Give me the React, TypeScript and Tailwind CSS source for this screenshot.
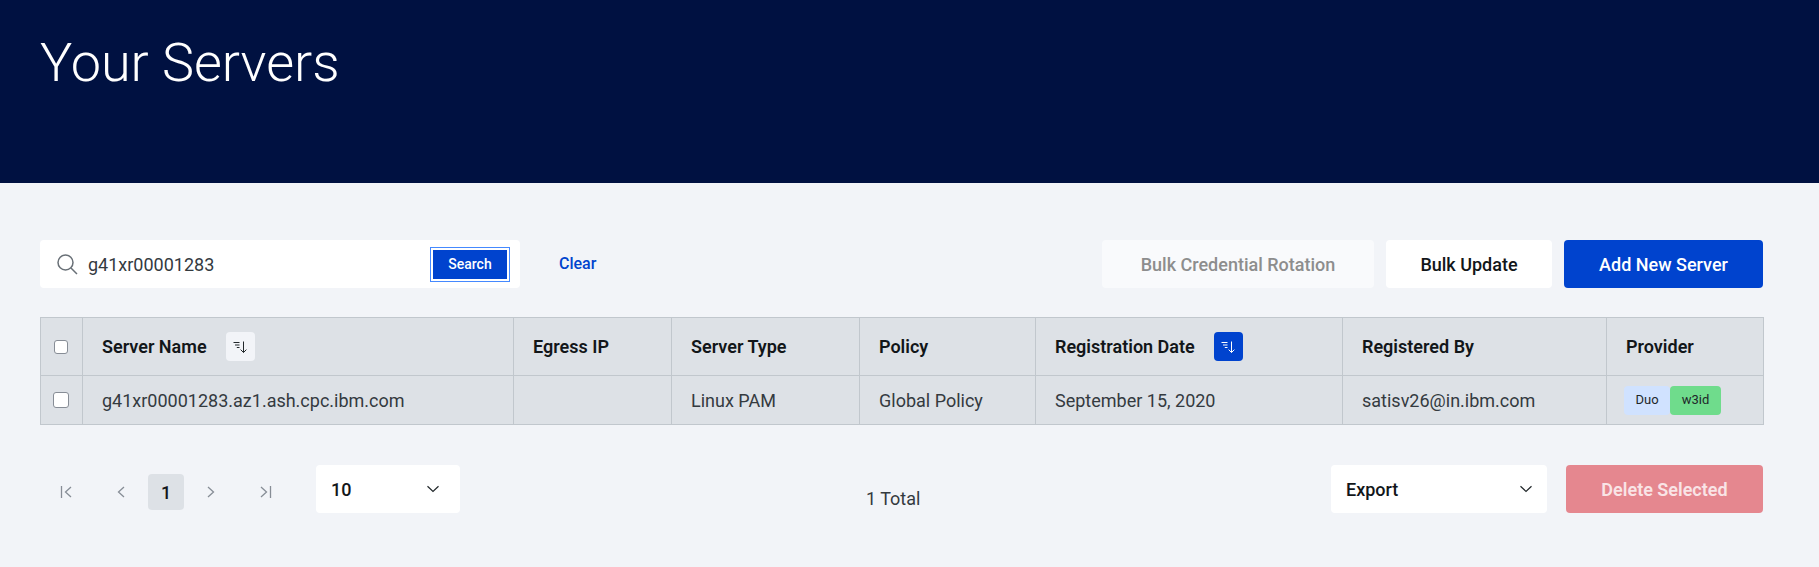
import React from "react";

const font = "font-['Roboto','Noto_Sans',sans-serif]";

function SortIcon({ className }: { className: string }) {
  return (
    <svg viewBox="0 0 16 16" className={className} fill="none" stroke="currentColor" strokeWidth="1">
      <path d="M1.5 3.5h6M3 6h4.5M4.8 8.5h2.7" />
      <path d="M11.5 2.5v11M8.6 10.6l2.9 2.9 2.9-2.9" />
    </svg>
  );
}

function Chevron() {
  return (
    <svg viewBox="0 0 14 8" className="h-2 w-3.5 text-[#21272a]" fill="none" stroke="currentColor" strokeWidth="1.2">
      <path d="M1.5 1.2 7 6.4l5.5-5.2" />
    </svg>
  );
}

function PageIcon({ d }: { d: string }) {
  return (
    <div className="flex h-9 w-[54px] items-center justify-center">
      <svg viewBox="0 0 14 16" className="h-4 w-3.5 text-[#878d96]" fill="none" stroke="currentColor" strokeWidth="1.3">
        <path d={d} />
      </svg>
    </div>
  );
}

const Th = ({ children, className = "" }: { children?: React.ReactNode; className?: string }) => (
  <th className={`border border-[#c1c7cd] pl-[19px] text-left text-[18px] font-semibold text-[#121619] ${className}`}>
    {children}
  </th>
);
const Td = ({ children, className = "" }: { children?: React.ReactNode; className?: string }) => (
  <td className={`border border-[#c1c7cd] pl-[19px] text-[18px] font-normal text-[#343a3f] ${className}`}>
    {children}
  </td>
);
const Check = ({ size }: { size: string }) => (
  <span className={`block rounded-[3px] border border-[#878d96] bg-white ${size}`} />
);

export default function App() {
  return (
    <div className={`${font} h-[567px] bg-[#f2f4f8]`}>
      <header className="h-[183px] bg-[#001141] px-10 pt-[27px]">
        <h1 className="text-[54px] leading-[72px] font-light text-white">Your Servers</h1>
      </header>
      <main className="px-10 pr-[56px] pt-[57px]">
        <div className="flex items-center">
          <div className="flex h-12 w-[480px] items-center rounded bg-white pl-[16px] pr-[10px]">
            <svg viewBox="0 0 22 22" className="h-[22px] w-[22px] text-[#697077]" fill="none" stroke="currentColor" strokeWidth="1.5">
              <circle cx="9.5" cy="9.5" r="7.5" />
              <path d="M15 15l6 6" />
            </svg>
            <span className="ml-[10px] flex-1 text-[18px] text-[#343a3f]">g41xr00001283</span>
            <div className="border border-[#4589ff] p-0.5">
              <button className="h-[29px] w-[74px] bg-[#0043ce] text-[14px] font-medium text-white">Search</button>
            </div>
          </div>
          <button className="ml-[39px] text-[16px] font-medium text-[#0043ce]">Clear</button>
          <div className="ml-auto flex gap-3">
            <button className="h-12 w-[272px] rounded bg-[#f9fafc] text-[18px] font-medium text-[#8d8d8d]">Bulk Credential Rotation</button>
            <button className="h-12 w-[166px] rounded bg-white text-[18px] font-medium text-[#121619]">Bulk Update</button>
            <button className="h-12 w-[199px] rounded bg-[#0043ce] text-[18px] font-medium text-white">Add New Server</button>
          </div>
        </div>

        <table className="mt-[29px] w-[1723px] table-fixed border-collapse bg-[#dde1e6]">
          <colgroup>
            <col className="w-[42px]" />
            <col className="w-[431px]" />
            <col className="w-[158px]" />
            <col className="w-[188px]" />
            <col className="w-[176px]" />
            <col className="w-[307px]" />
            <col className="w-[264px]" />
            <col className="w-[157px]" />
          </colgroup>
          <thead>
            <tr className="h-[58px]">
              <th className="border border-[#c1c7cd] pl-[13px]"><Check size="h-[14px] w-[14px]" /></th>
              <Th>
                <span className="flex items-center">
                  Server Name
                  <span className="ml-[19px] flex h-[29px] w-[29px] items-center justify-center rounded bg-[#f2f4f8] text-[#21272a]">
                    <SortIcon className="h-4 w-4" />
                  </span>
                </span>
              </Th>
              <Th>Egress IP</Th>
              <Th>Server Type</Th>
              <Th>Policy</Th>
              <Th>
                <span className="flex items-center">
                  Registration Date
                  <span className="ml-[19px] flex h-[29px] w-[29px] items-center justify-center rounded bg-[#0043ce] text-white">
                    <SortIcon className="h-4 w-4" />
                  </span>
                </span>
              </Th>
              <Th>Registered By</Th>
              <Th>Provider</Th>
            </tr>
          </thead>
          <tbody>
            <tr className="h-[49px]">
              <td className="border border-[#c1c7cd] pl-[12px]"><Check size="h-4 w-4" /></td>
              <Td>g41xr00001283.az1.ash.cpc.ibm.com</Td>
              <Td />
              <Td>Linux PAM</Td>
              <Td>Global Policy</Td>
              <Td>September 15, 2020</Td>
              <Td>satisv26@in.ibm.com</Td>
              <td className="border border-[#c1c7cd] pl-[17px]">
                <span className="flex text-[13px] text-[#21272a]">
                  <span className="flex h-[29px] w-[46px] items-center justify-center rounded bg-[#d0e2ff]">Duo</span>
                  <span className="flex h-[29px] w-[51px] items-center justify-center rounded bg-[#6fdc8c]">w3id</span>
                </span>
              </td>
            </tr>
          </tbody>
        </table>

        <div className="mt-10 flex h-12 items-start">
          <div className="flex w-[276px] items-start">
            <div className="mt-[9px] flex items-center">
              <PageIcon d="M1.5 2v12M11 3 5.5 8l5.5 5" />
              <PageIcon d="M10 3 4.5 8l5.5 5" />
              <div className="flex h-9 w-9 items-center justify-center rounded bg-[#dde1e6] text-[18px] font-medium text-[#121619]">1</div>
              <PageIcon d="M4 3l5.5 5L4 13" />
              <PageIcon d="M12.5 2v12M3 3l5.5 5L3 13" />
            </div>
          </div>
          <div className="flex h-12 w-[144px] items-center justify-between rounded bg-white pl-[15px] pr-5 text-[18px] font-medium text-[#121619]">
            10
            <Chevron />
          </div>
          <div className="mt-[20px] ml-[406px] text-[18px] text-[#343a3f]">1 Total</div>
          <div className="ml-auto flex gap-[19px]">
            <div className="flex h-12 w-[216px] items-center justify-between rounded bg-white pl-[15px] pr-[14px] text-[18px] font-medium text-[#121619]">
              Export
              <Chevron />
            </div>
            <button className="h-12 w-[197px] rounded bg-[#e5878f] text-[18px] font-semibold text-[#f9e4e6]">Delete Selected</button>
          </div>
        </div>
      </main>
    </div>
  );
}
